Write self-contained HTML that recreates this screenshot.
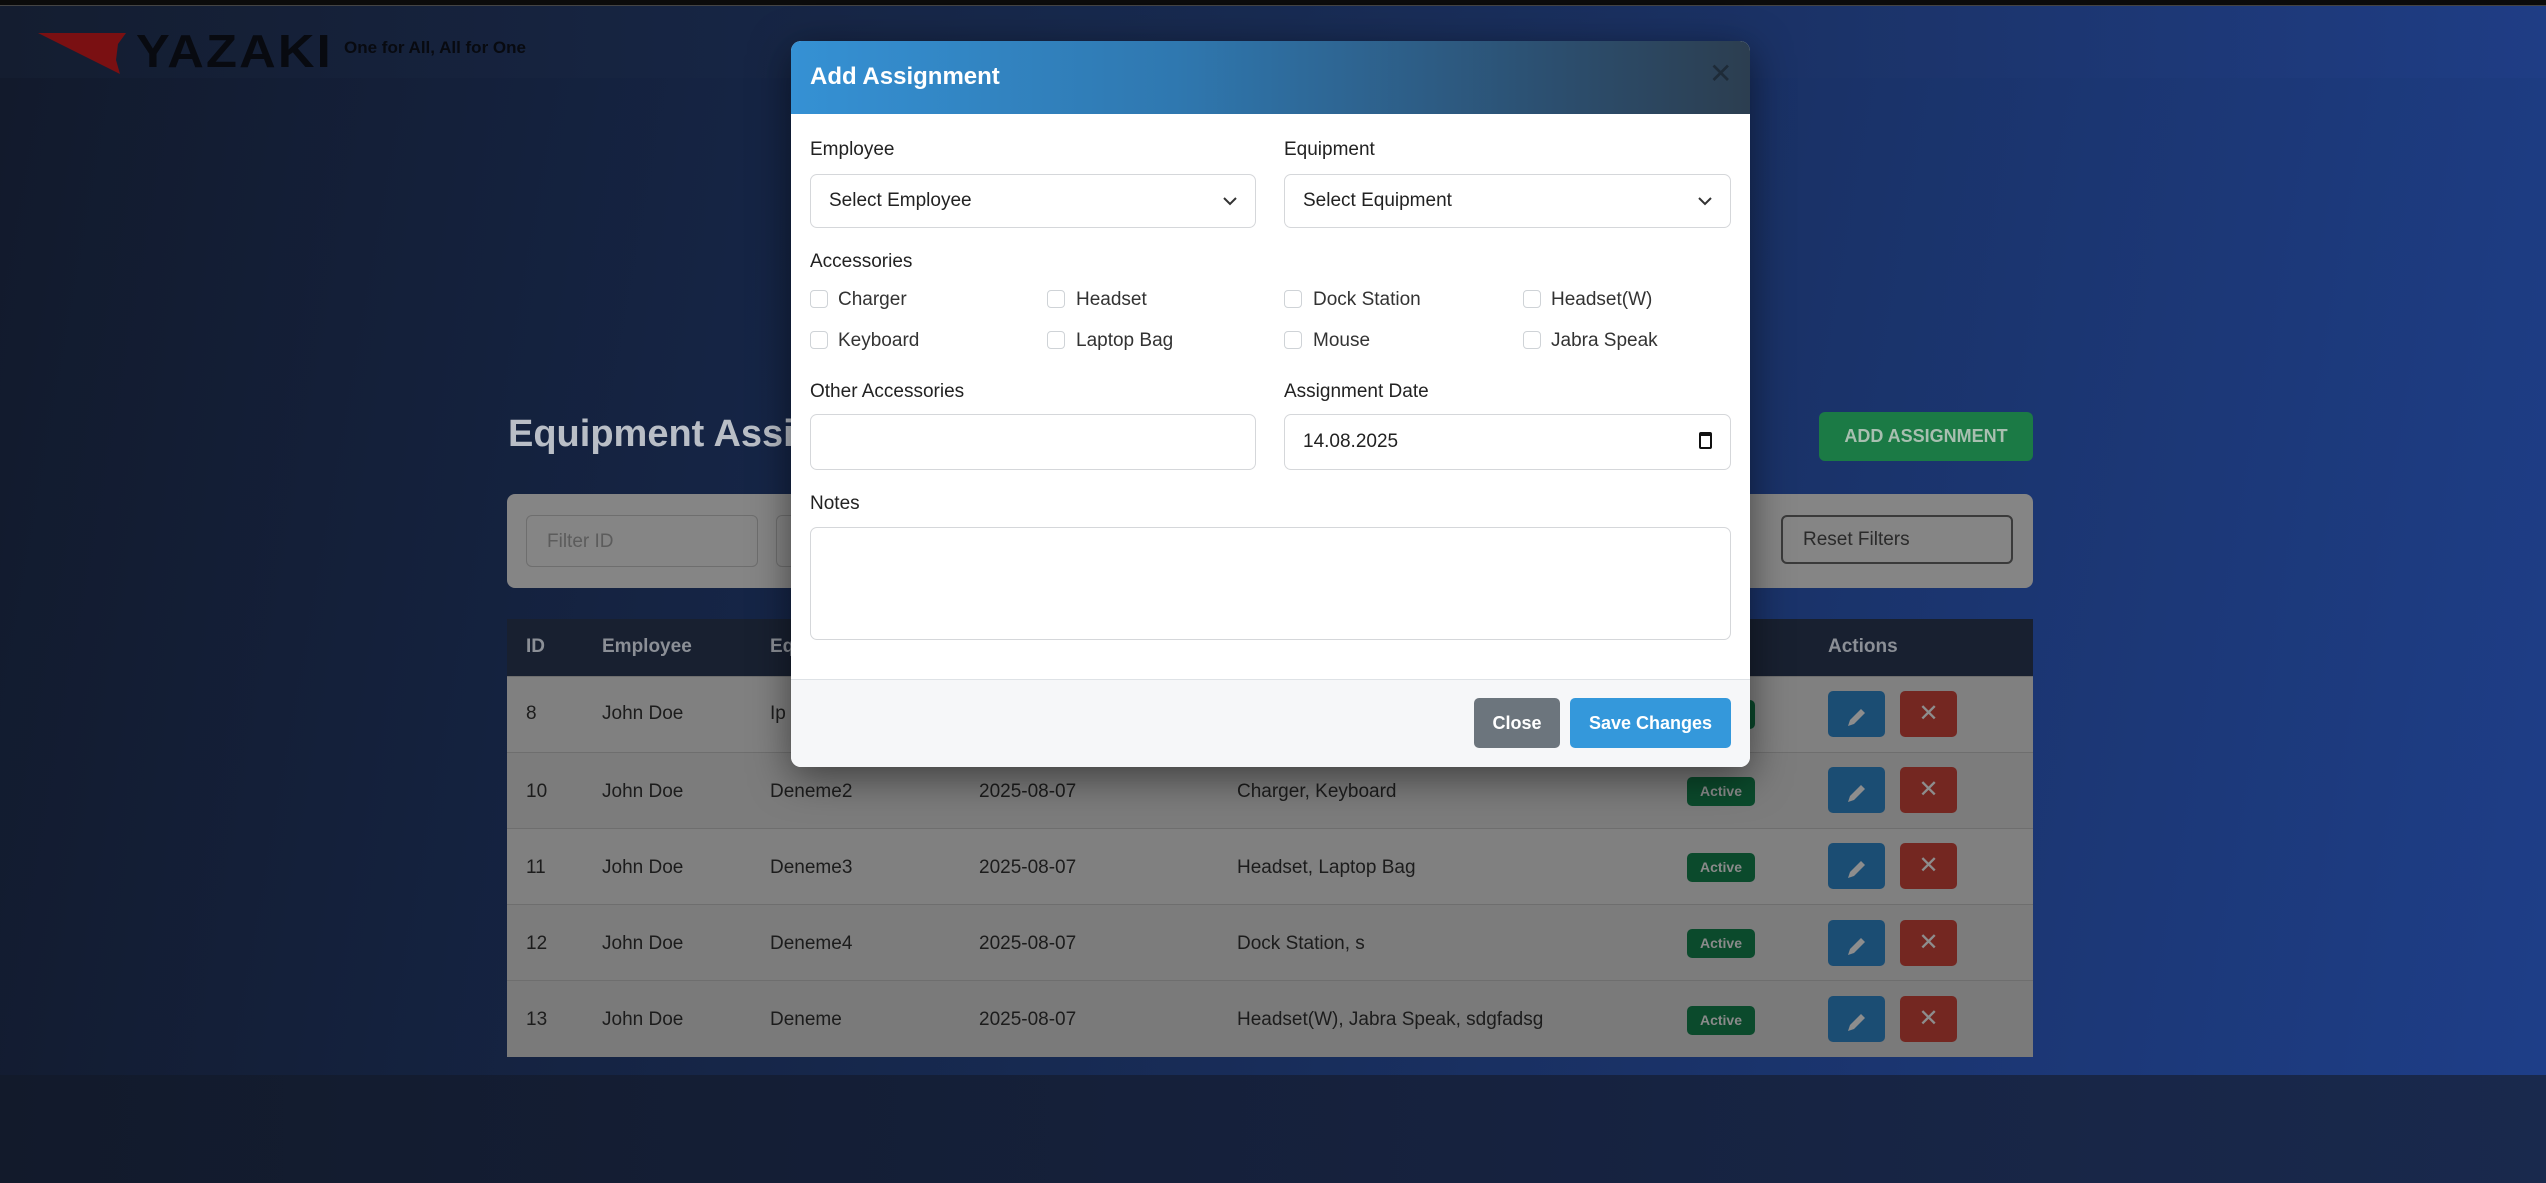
<!DOCTYPE html>
<html><head><meta charset="utf-8"><style>
*{box-sizing:border-box;margin:0;padding:0}
body{width:2546px;height:1183px;overflow:hidden;font-family:"Liberation Sans",sans-serif;background:#141c2e;position:relative}
.abs{position:absolute}
#top{left:0;top:0;width:2546px;height:6px;background:#0b0b0b;border-bottom:1px solid #444}
#nav{left:0;top:6px;width:2546px;height:72px;background:linear-gradient(90deg,#141d30,#182b52 50%,#1f3d85)}
#main{left:0;top:78px;width:2546px;height:997px;background:linear-gradient(100deg,#121a2c 0%,#172a52 45%,#1e3e88 100%)}
#foot{left:0;top:1075px;width:2546px;height:108px;background:linear-gradient(90deg,#121a2b,#16223f 60%,#19294d)}
.cell{position:absolute;font-size:19px;color:#1c1c1c}
.row{position:absolute;left:507px;width:1526px;height:76px;border-top:1px solid #6e6e6e}
.badge{position:absolute;left:1687px;width:68px;height:29px;background:#0b4a2c;border-radius:5px;color:#8a8a8a;font-size:14px;font-weight:bold;text-align:center;line-height:29px}
.ed{position:absolute;left:1828px;width:57px;height:46px;background:#1b4d73;border-radius:5px}
.dl{position:absolute;left:1900px;width:57px;height:46px;background:#742721;border-radius:5px;color:#8d8d8d;font-size:24px;text-align:center;line-height:46px}
.lbl{position:absolute;font-size:19px;color:#222}
.inp{position:absolute;border:1px solid #d5d7da;border-radius:7px;background:#fff;font-size:19px;color:#222;padding-left:18px}
.cb{position:absolute;width:18px;height:18px;border:1px solid #cfd3d7;border-radius:4px}
.cbl{position:absolute;font-size:19px;color:#333}
</style></head><body>
<div id="top" class="abs"></div>
<div id="nav" class="abs"></div>
<div id="main" class="abs"></div>
<div id="foot" class="abs"></div>
<svg class="abs" style="left:38px;top:32px" width="90" height="44"><polygon points="0,1 88,1 80,12 78,28 82,42" fill="#7a1012"/></svg>
<div class="abs" style="left:136px;top:24px;font-size:46px;font-weight:900;color:#080a10;letter-spacing:2px;transform:scaleX(1.1);transform-origin:left">YAZAKI</div>
<div class="abs" style="left:344px;top:38px;font-size:17px;font-weight:bold;color:#080a10">One for All, All for One</div>

<div class="abs" style="left:508px;top:413px;font-size:38px;font-weight:bold;color:#b9bec6">Equipment Assi</div>
<div class="abs" style="left:1819px;top:412px;width:214px;height:49px;background:#1b7a45;border-radius:6px;color:#a8bfb0;font-size:18px;font-weight:bold;text-align:center;line-height:49px">ADD ASSIGNMENT</div>

<div class="abs" style="left:507px;top:494px;width:1526px;height:94px;background:#858585;border-radius:8px"></div>
<div class="abs" style="left:526px;top:515px;width:232px;height:52px;border:1px solid #6e6e6e;border-radius:6px;color:#5c5c5c;font-size:19px;line-height:52px;padding-left:20px">Filter ID</div>
<div class="abs" style="left:776px;top:515px;width:40px;height:52px;border:1px solid #6e6e6e;border-radius:6px"></div>
<div class="abs" style="left:1781px;top:515px;width:232px;height:49px;border:2px solid #3a3a3a;border-radius:6px;color:#2a2a2a;font-size:19px;line-height:45px;padding-left:20px">Reset Filters</div>

<div class="abs" style="left:507px;top:619px;width:1526px;height:57px;background:#182030"></div>
<div class="cell" style="left:526px;top:636px;color:#8b8f96;font-weight:bold">ID</div>
<div class="cell" style="left:602px;top:636px;color:#8b8f96;font-weight:bold">Employee</div>
<div class="cell" style="left:770px;top:636px;color:#8b8f96;font-weight:bold">Eq</div>
<div class="cell" style="left:1828px;top:636px;color:#8b8f96;font-weight:bold">Actions</div>

<div class="row" style="top:676px;background:#808080"></div>
<div class="row" style="top:752px;background:#7c7c7c"></div>
<div class="row" style="top:828px;background:#808080"></div>
<div class="row" style="top:904px;background:#7c7c7c"></div>
<div class="row" style="top:980px;background:#7a7a7a;height:77px"></div>

<div class="cell" style="left:526px;top:703px">8</div><div class="cell" style="left:602px;top:703px">John Doe</div><div class="cell" style="left:770px;top:703px">Ip</div>
<div class="cell" style="left:526px;top:781px">10</div><div class="cell" style="left:602px;top:781px">John Doe</div><div class="cell" style="left:770px;top:781px">Deneme2</div><div class="cell" style="left:979px;top:781px">2025-08-07</div><div class="cell" style="left:1237px;top:781px">Charger, Keyboard</div>
<div class="cell" style="left:526px;top:857px">11</div><div class="cell" style="left:602px;top:857px">John Doe</div><div class="cell" style="left:770px;top:857px">Deneme3</div><div class="cell" style="left:979px;top:857px">2025-08-07</div><div class="cell" style="left:1237px;top:857px">Headset, Laptop Bag</div>
<div class="cell" style="left:526px;top:933px">12</div><div class="cell" style="left:602px;top:933px">John Doe</div><div class="cell" style="left:770px;top:933px">Deneme4</div><div class="cell" style="left:979px;top:933px">2025-08-07</div><div class="cell" style="left:1237px;top:933px">Dock Station, s</div>
<div class="cell" style="left:526px;top:1009px">13</div><div class="cell" style="left:602px;top:1009px">John Doe</div><div class="cell" style="left:770px;top:1009px">Deneme</div><div class="cell" style="left:979px;top:1009px">2025-08-07</div><div class="cell" style="left:1237px;top:1009px">Headset(W), Jabra Speak, sdgfadsg</div>

<div class="badge" style="top:700px"></div>
<div class="badge" style="top:777px">Active</div>
<div class="badge" style="top:853px">Active</div>
<div class="badge" style="top:929px">Active</div>
<div class="badge" style="top:1006px">Active</div>

<div class="ed" style="top:691px"></div><div class="dl" style="top:691px">✕</div>
<div class="ed" style="top:767px"></div><div class="dl" style="top:767px">✕</div>
<div class="ed" style="top:843px"></div><div class="dl" style="top:843px">✕</div>
<div class="ed" style="top:920px"></div><div class="dl" style="top:920px">✕</div>
<div class="ed" style="top:996px"></div><div class="dl" style="top:996px">✕</div>
<svg class="abs" style="left:0;top:0" width="2546" height="1183">
<g fill="#8d8d8d">
<path d="M1850,720 l11,-11 4,4 -11,11 -6,2z"/>
<path d="M1850,796 l11,-11 4,4 -11,11 -6,2z"/>
<path d="M1850,872 l11,-11 4,4 -11,11 -6,2z"/>
<path d="M1850,949 l11,-11 4,4 -11,11 -6,2z"/>
<path d="M1850,1025 l11,-11 4,4 -11,11 -6,2z"/>
</g></svg>

<div class="abs" style="left:791px;top:41px;width:959px;height:726px;background:#fff;border-radius:10px;overflow:hidden;box-shadow:0 10px 40px rgba(0,0,0,.5)">
 <div style="position:absolute;left:0;top:0;width:959px;height:73px;background:linear-gradient(90deg,#3591d4 0%,#2f78b0 40%,#2c4e6e 80%,#2c3e50 100%)"></div>
 <div style="position:absolute;left:19px;top:22px;font-size:24px;font-weight:bold;color:#fff">Add Assignment</div>
 <div style="position:absolute;left:918px;top:16px;font-size:28px;color:#1e2b38">✕</div>
 <div style="position:absolute;left:0;top:638px;width:959px;height:88px;background:#f6f7f9;border-top:1px solid #dee2e6"></div>
 <div style="position:absolute;left:683px;top:657px;width:86px;height:50px;background:#6c757d;border-radius:5px;color:#fff;font-weight:bold;font-size:18px;text-align:center;line-height:50px">Close</div>
 <div style="position:absolute;left:779px;top:657px;width:161px;height:50px;background:#3498db;border-radius:5px;color:#fff;font-weight:bold;font-size:18px;text-align:center;line-height:50px">Save Changes</div>
</div>
<div class="lbl" style="left:810px;top:139px">Employee</div>
<div class="lbl" style="left:1284px;top:139px">Equipment</div>
<div class="inp" style="left:810px;top:174px;width:446px;height:54px;line-height:52px">Select Employee<svg style="position:absolute;right:18px;top:22px" width="14" height="9"><path d="M1,1 7,7 13,1" fill="none" stroke="#333" stroke-width="2"/></svg></div>
<div class="inp" style="left:1284px;top:174px;width:447px;height:54px;line-height:52px">Select Equipment<svg style="position:absolute;right:18px;top:22px" width="14" height="9"><path d="M1,1 7,7 13,1" fill="none" stroke="#333" stroke-width="2"/></svg></div>
<div class="lbl" style="left:810px;top:251px">Accessories</div>
<div class="cb" style="left:810px;top:290px"></div><div class="cbl" style="left:838px;top:289px">Charger</div>
<div class="cb" style="left:1047px;top:290px"></div><div class="cbl" style="left:1076px;top:289px">Headset</div>
<div class="cb" style="left:1284px;top:290px"></div><div class="cbl" style="left:1313px;top:289px">Dock Station</div>
<div class="cb" style="left:1523px;top:290px"></div><div class="cbl" style="left:1551px;top:289px">Headset(W)</div>
<div class="cb" style="left:810px;top:331px"></div><div class="cbl" style="left:838px;top:330px">Keyboard</div>
<div class="cb" style="left:1047px;top:331px"></div><div class="cbl" style="left:1076px;top:330px">Laptop Bag</div>
<div class="cb" style="left:1284px;top:331px"></div><div class="cbl" style="left:1313px;top:330px">Mouse</div>
<div class="cb" style="left:1523px;top:331px"></div><div class="cbl" style="left:1551px;top:330px">Jabra Speak</div>
<div class="lbl" style="left:810px;top:381px">Other Accessories</div>
<div class="lbl" style="left:1284px;top:381px">Assignment Date</div>
<div class="inp" style="left:810px;top:414px;width:446px;height:56px"></div>
<div class="inp" style="left:1284px;top:414px;width:447px;height:56px;line-height:54px">14.08.2025<span style="position:absolute;right:18px;top:17px;width:13px;height:17px;border:2px solid #111;border-top-width:4px;border-radius:2px"></span></div>
<div class="lbl" style="left:810px;top:493px">Notes</div>
<div class="inp" style="left:810px;top:527px;width:921px;height:113px"></div>
</body></html>
